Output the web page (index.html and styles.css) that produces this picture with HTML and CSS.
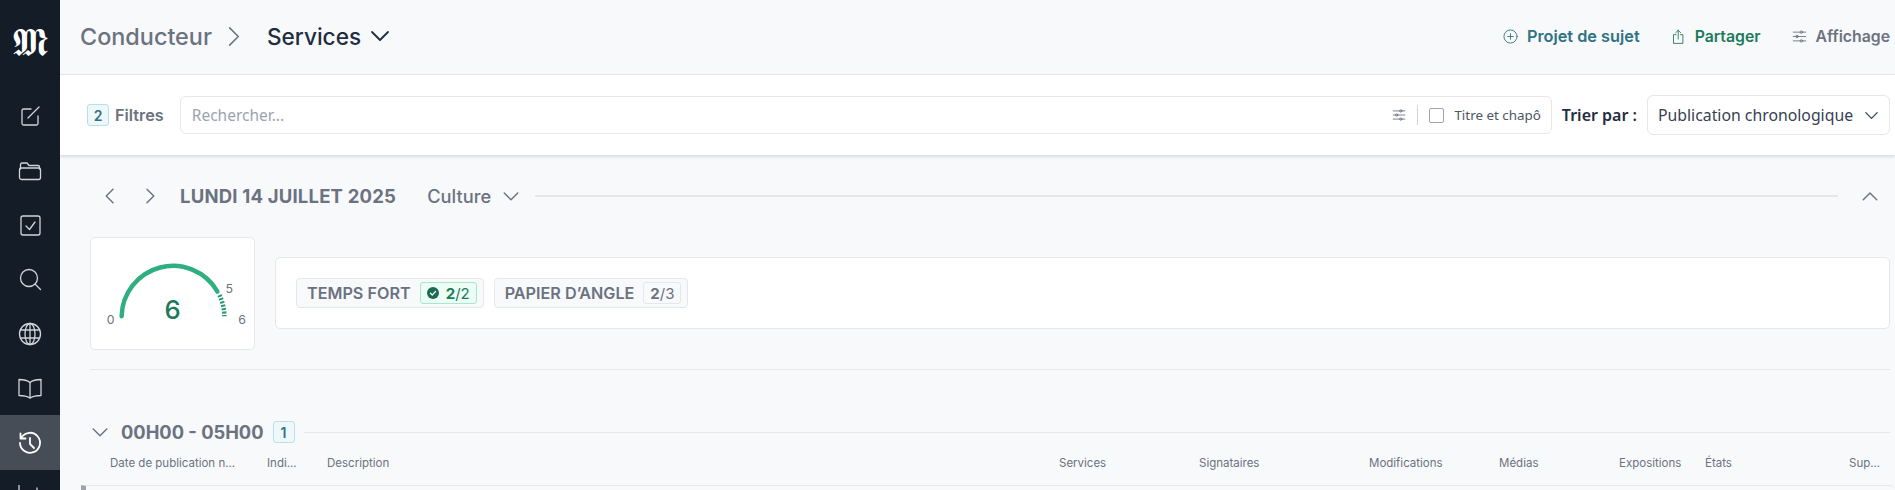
FILE: index.html
```html
<!DOCTYPE html>
<html lang="fr">
<head>
<meta charset="utf-8">
<title>Conducteur</title>
<link rel="stylesheet" href="styles.css">
</head>
<body>
<div class="app">
  <nav class="side">
    <div class="logo">𝕸</div>
    <a class="nav"><svg viewBox="0 0 24 24"><path d="M13 5H5.500A1.500 1.500 0 0 0 4 6.500v13A1.500 1.500 0 0 0 5.500 21h13a1.500 1.500 0 0 0 1.500-1.500V12"/><path d="M10 14 21 3"/></svg></a>
    <a class="nav"><svg viewBox="0 0 24 24"><path d="M2.500 10V5.500A1.500 1.500 0 0 1 4 4h5l2 2.500h9A1.500 1.500 0 0 1 21.500 8v2"/><rect x="1.500" y="9" width="21" height="11.500" rx="2"/></svg></a>
    <a class="nav"><svg viewBox="0 0 24 24"><rect x="3" y="3" width="19" height="19" rx="2"/><path d="m8 13 3.500 3.500L17 9"/></svg></a>
    <a class="nav"><svg viewBox="0 0 24 24"><circle cx="11" cy="11" r="8.500"/><path d="m17.500 17.500 5 5"/></svg></a>
    <a class="nav"><svg viewBox="0 0 24 24"><circle cx="12" cy="12" r="10.500"/><ellipse cx="12" cy="12" rx="5" ry="10.500"/><path d="M12 1.500v21M2.500 8h19M2.500 16h19"/></svg></a>
    <a class="nav"><svg viewBox="0 0 24 24"><path d="M12 6.500C9.500 4.500 5.500 3.500 1 3.500v16c4.500 0 8.500 1 11 2.500 2.500-1.500 6.500-2.500 11-2.500v-16c-4.500 0-8.500 1-11 3Z"/><path d="M12 6.500V22"/></svg></a>
    <a class="nav active"><svg viewBox="0 0 24 24"><path d="M3.500 6.500A10 10 0 1 1 2 12"/><path d="M2.500 2.500v5h5"/><path d="M12 7v6l4 4"/></svg></a>
    <a class="nav"><svg viewBox="0 0 24 24"><path d="M1 0v22M19 3v19M10 10v12"/></svg></a>
  </nav>
  <main class="main">
    <header class="top">
      <div class="crumbs">
        <span class="crumb">Conducteur</span>
        <svg class="crumb-sep" viewBox="0 0 24 24"><path d="m8 3 9 9-9 9"/></svg>
        <span class="current">Services</span>
        <svg class="crumb-chev" viewBox="0 0 24 24"><path d="m4 8 8 8 8-8"/></svg>
      </div>
      <div class="actions">
        <a class="act act-blue"><svg viewBox="0 0 24 24"><circle cx="12" cy="12" r="10.500"/><path d="M12 7.500v9M7.500 12h9"/></svg>Projet de sujet</a>
        <a class="act act-green"><svg viewBox="0 0 24 24"><path d="M8 9H4v14h15V9h-4"/><path d="M11.500 16V2M7.500 6l4-4 4 4"/></svg>Partager</a>
        <a class="act act-grey"><svg viewBox="0 0 24 24"><path d="M2 5h20M2 12h20M2 19h20"/><circle cx="15" cy="5" r="2"/><circle cx="8" cy="12" r="2"/><circle cx="15" cy="19" r="2"/></svg>Affichage</a>
      </div>
    </header>
    <section class="filters">
      <span class="count">2</span><span class="filters-label">Filtres</span>
      <div class="search">
        <span class="placeholder">Rechercher...</span>
        <svg class="tune" viewBox="0 0 24 24"><path d="M2 5h20M2 12h20M2 19h20"/><circle cx="15" cy="5" r="2"/><circle cx="8" cy="12" r="2"/><circle cx="15" cy="19" r="2"/></svg>
        <span class="vsep"></span>
        <span class="check"></span>
        <span class="check-label">Titre et chapô</span>
      </div>
      <span class="sort-label">Trier par :</span>
      <div class="select">
        <span>Publication chronologique</span>
        <svg viewBox="0 0 24 24"><path d="m4 8 8 8 8-8"/></svg>
      </div>
    </section>
    <section class="content">
      <div class="day">
        <svg class="day-arrow" viewBox="0 0 24 24"><path d="m16 3-9 9 9 9"/></svg>
        <svg class="day-arrow" viewBox="0 0 24 24"><path d="m8 3 9 9-9 9"/></svg>
        <span class="day-title">LUNDI 14 JUILLET 2025</span>
        <span class="day-service">Culture</span>
        <svg class="day-chev" viewBox="0 0 24 24"><path d="m3 8 9 9 9-9"/></svg>
        <span class="rule"></span>
        <svg class="day-up" viewBox="0 0 24 24"><path d="m3 17 9-9 9 9"/></svg>
      </div>
      <div class="summary">
        <div class="gauge">
          <svg viewBox="0 0 165 112" class="gauge-svg">
            <path class="arc" d="M31 79A52 52 0 0 1 128 54"/>
            <path class="arc-hatch" d="M130 57.500A52 52 0 0 1 135 79"/>
            <text class="g-val" x="82.500" y="82" text-anchor="middle">6</text>
            <text class="g-num" x="20" y="87" text-anchor="middle">0</text>
            <text class="g-num" x="140" y="56" text-anchor="middle">5</text>
            <text class="g-num" x="153" y="87" text-anchor="middle">6</text>
          </svg>
        </div>
        <div class="tags">
          <span class="tag">TEMPS FORT
            <span class="pill pill-ok"><svg viewBox="0 0 24 24"><circle cx="12" cy="12" r="12"/><path d="m7 12.500 3.500 3.500 6.500-7"/></svg><b>2</b>/2</span>
          </span>
          <span class="tag">PAPIER D’ANGLE
            <span class="pill"><b>2</b>/3</span>
          </span>
        </div>
      </div>
      <div class="group">
        <svg class="group-chev" viewBox="0 0 24 24"><path d="m3 8 9 9 9-9"/></svg>
        <span class="group-title">00H00 - 05H00</span>
        <span class="count">1</span>
        <span class="group-rule"></span>
      </div>
      <div class="cols">
        <span class="c c1">Date de publication n...</span>
        <span class="c c2">Indi...</span>
        <span class="c c3">Description</span>
        <span class="c c4">Services</span>
        <span class="c c5">Signataires</span>
        <span class="c c6">Modifications</span>
        <span class="c c7">Médias</span>
        <span class="c c8">Expositions</span>
        <span class="c c9">États</span>
        <span class="c c10">Sup...</span>
      </div>
      <div class="table-top"></div>
    </section>
  </main>
</div>
</body>
</html>
```
FILE: styles.css
```css
* { box-sizing: border-box; }
html, body { margin: 0; height: 100%; overflow: hidden; }
body { font-family: Inter, Lato, sans-serif; background: #f8f9fb; color: #6b7280; }
svg { fill: none; stroke: currentColor; stroke-linecap: round; stroke-linejoin: round; flex: none; }
.app { display: flex; height: 490px; }

.side { width: 60px; flex: none; background: #141c27; display: flex; flex-direction: column; align-items: center; overflow: hidden; }
.logo { height: 89px; flex: none; padding-top: 20px; font-family: "DejaVu Sans", serif; font-size: 38px; line-height: 46px; color: #fff; }
.nav { width: 60px; height: 54.400px; flex: none; display: flex; align-items: center; justify-content: center; color: #d1d5db; }
.nav svg { width: 24px; height: 24px; stroke-width: 1.300; }
.nav.active { background: #474d56; color: #fff; }
.nav.active svg { stroke-width: 1.800; }

.main { flex: 1; min-width: 0; display: flex; flex-direction: column; }
.top { height: 75px; flex: none; border-bottom: 1px solid #e5e7eb; display: flex; align-items: center; justify-content: space-between; padding: 0 5px 2px 20px; }
.crumbs { display: flex; align-items: center; }
.crumb { font-size: 23.400px; font-weight: 500; color: #6b7280; }
.crumb-sep { width: 23px; height: 23px; margin: 0 22px 0 10px; stroke-width: 1.600; color: #6b7280; }
.current { font-size: 22.600px; font-weight: 500; color: #1f2d40; }
.crumb-chev { width: 24px; height: 24px; margin-left: 7px; stroke-width: 1.800; color: #1f2d40; }
.actions { display: flex; align-items: center; gap: 31px; }
.act { display: flex; align-items: center; gap: 9px; font-size: 15.800px; font-weight: 600; white-space: nowrap; }
.act svg { width: 15px; height: 15px; stroke-width: 1.400; }
.act-blue { color: #2f7282; font-size: 16.300px; }
.act-green { color: #1b7a5a; }
.act-grey { color: #6b7280; }

.filters { height: 80px; flex: none; background: #fff; display: flex; align-items: center; padding: 0 5px 0 27px; box-shadow: 0 2px 3px rgba(60, 70, 90, .16); position: relative; font-family: "Noto Sans", sans-serif; }
.count { width: 22px; height: 22px; flex: none; border: 1px solid #b5e0ee; border-radius: 3px; background: #eef8fb; color: #2f7282; font-family: Inter, sans-serif; font-weight: 600; font-size: 14px; display: flex; align-items: center; justify-content: center; }
.filters-label { margin: 0 16px 0 6px; font-family: Inter, sans-serif; font-weight: 600; font-size: 16.300px; color: #6b7280; }
.search { flex: 1; height: 38px; border: 1px solid #e5e7eb; border-radius: 6px; display: flex; align-items: center; padding: 0 10px 0 11px; }
.placeholder { flex: 1; font-size: 15.500px; color: #9ca3af; }
.tune { width: 14px; height: 14px; stroke-width: 1.500; color: #6b7280; }
.vsep { width: 1px; height: 20px; background: #d1d5db; margin: 0 11px 0 11px; }
.check { width: 15px; height: 15px; border: 1px solid #9ca3af; border-radius: 2px; margin-right: 10px; }
.check-label { font-size: 13.400px; color: #4b5563; }
.sort-label { margin: 0 10px; font-size: 16px; font-weight: 600; color: #1f2d40; white-space: nowrap; }
.select { width: 243px; height: 40px; border: 1px solid #e5e7eb; border-radius: 6px; display: flex; align-items: center; justify-content: space-between; padding: 0 9px 0 10px; font-size: 15.800px; color: #374151; }
.select svg { width: 17px; height: 17px; stroke-width: 1.800; }

.content { flex: 1; min-height: 0; padding: 0 5px 0 30px; display: flex; flex-direction: column; }
.day { height: 82px; flex: none; display: flex; align-items: center; }
.day-arrow { width: 18px; height: 18px; stroke-width: 1.900; margin-right: 22px; color: #6b7280; }
.day-arrow:first-child { margin-left: 11px; }
.day-title { margin-left: -1px; font-size: 18.500px; font-weight: 700; letter-spacing: .2px; white-space: nowrap; }
.day-service { margin-left: 31px; font-size: 18.300px; font-weight: 500; }
.day-chev { width: 18px; height: 18px; margin-left: 11px; stroke-width: 1.900; }
.rule { flex: 1; height: 2px; margin: 0 23px 0 15px; background: #e5e7eb; }
.day-up { width: 18px; height: 18px; margin-right: 11px; stroke-width: 1.900; }

.summary { height: 133px; flex: none; display: flex; align-items: center; gap: 20px; border-bottom: 1px solid #e5e7eb; padding-bottom: 20px; }
.gauge { width: 165px; height: 113px; flex: none; background: #fff; border: 1px solid #e5e7eb; border-radius: 5px; }
.gauge-svg { display: block; width: 100%; height: 100%; }
.arc { stroke: #2fae80; stroke-width: 4.500; }
.arc-hatch { stroke: #2a9a74; stroke-width: 4.500; stroke-dasharray: 2 1.500; stroke-linecap: butt; }
.g-val { fill: #1b7a5a; stroke: none; font-size: 26px; font-weight: 500; }
.g-num { fill: #6b7280; stroke: none; font-size: 12.500px; }
.tags { flex: 1; height: 72px; background: #fff; border: 1px solid #e5e7eb; border-radius: 5px; display: flex; align-items: center; gap: 10px; padding-left: 20px; }
.tag { height: 30px; display: flex; align-items: center; gap: 9px; padding: 0 6px 0 10px; background: #f8f9fb; border: 1px solid #e5e7eb; border-radius: 4px; font-size: 16.200px; font-weight: 600; white-space: nowrap; }
.pill { height: 22px; display: flex; align-items: center; padding: 0 6px; border: 1px solid #e5e7eb; border-radius: 3px; font-size: 15px; font-weight: 400; }
.pill b { font-weight: 700; }
.pill-ok { background: #ecfdf5; border-color: #a7e8cc; color: #1b7a5a; }
.pill svg { width: 12px; height: 12px; margin-right: 7px; fill: #1b6b52; stroke: none; }
.pill svg path { stroke: #fff; stroke-width: 2.500; fill: none; }

.group { flex: none; height: 26px; margin-top: 49px; display: flex; align-items: center; padding-left: 1px; }
.group-chev { width: 18px; height: 18px; margin-right: 12px; stroke-width: 1.900; }
.group-title { margin-right: 9px; font-size: 18.300px; font-weight: 700; white-space: nowrap; }
.group-rule { flex: 1; height: 1px; margin-left: 9px; background: #e5e7eb; }
.cols { flex: none; height: 40px; padding-top: 11px; display: flex; font-size: 11.500px; color: #6b7280; white-space: nowrap; }
.c { display: block; flex: none; }
.c1 { margin-left: 20px; width: 157px; }
.c2 { width: 60px; }
.c3 { width: 732px; }
.c4 { width: 140px; }
.c5 { width: 170px; }
.c6 { width: 130px; }
.c7 { width: 120px; }
.c8 { width: 86px; }
.c9 { width: 144px; }
.table-top { flex: none; height: 8px; margin: 0 -5px 0 -9px; border-top: 1px solid #e5e7eb; border-left: 5px solid #9ca3af; border-top-right-radius: 5px; background: #f8f9fb; }
```
